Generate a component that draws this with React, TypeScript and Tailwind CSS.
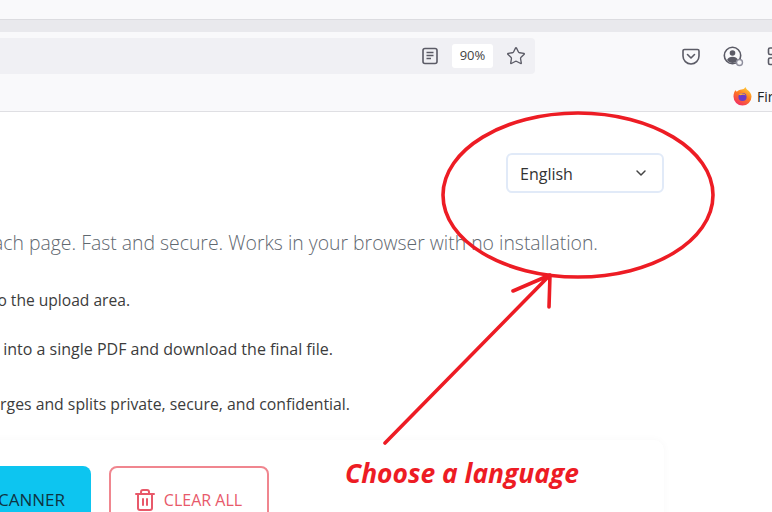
import React from 'react';
import { ChevronDown, Star, Trash2 } from 'lucide-react';

const ReaderIcon = () => (
    <svg width="16" height="18" viewBox="0 0 16 18" fill="none" stroke="#5b5b66" strokeWidth="1.6">
        <rect x="1" y="1.5" width="14" height="15" rx="2" />
        <path d="M4.5 5.5h7M4.5 8.5h7M4.5 11.5h4.5" />
    </svg>
);

const PocketIcon = () => (
    <svg width="18" height="17" viewBox="0 0 18 17" fill="none" stroke="#5b5b66" strokeWidth="1.6" strokeLinecap="round" strokeLinejoin="round">
        <path d="M2.5 1.5h13a1.5 1.5 0 0 1 1.5 1.5v5a8 8 0 0 1-16 0V3a1.5 1.5 0 0 1 1.5-1.5z" />
        <path d="M5.5 6.5 9 10l3.5-3.5" />
    </svg>
);

const AccountIcon = () => (
    <svg width="22" height="22" viewBox="0 0 22 22" fill="none">
        <circle cx="9.5" cy="9.5" r="8.2" stroke="#5b5b66" strokeWidth="1.6" />
        <circle cx="9.5" cy="7" r="2.8" fill="#5b5b66" />
        <path d="M4 14c1-2.500 3-3.200 5.500-3.200S14 11.500 15 14c-1.500 2-3.500 3-5.500 3S5.500 16 4 14z" fill="#5b5b66" />
        <circle cx="16.500" cy="16.500" r="3" fill="#f9f9fb" stroke="#8f8f9d" strokeWidth="1.400" />
    </svg>
);

const ExtensionsIcon = () => (
    <svg width="20" height="20" viewBox="0 0 20 20" fill="none" stroke="#5b5b66" strokeWidth="1.6">
        <rect x="1.500" y="2" width="6.500" height="6.500" rx="1.500" />
        <rect x="1.500" y="12" width="6.500" height="6.500" rx="1.500" />
        <path d="M8 5.500h4M8 15h4" />
    </svg>
);

const FirefoxLogo = () => (
    <svg width="19" height="19" viewBox="0 0 20 20">
        <defs>
            <linearGradient id="ff" x1="0.8" y1="0" x2="0.2" y2="1">
                <stop offset="0" stopColor="#ffd43a" />
                <stop offset="0.45" stopColor="#ff7a1f" />
                <stop offset="1" stopColor="#f0286a" />
            </linearGradient>
        </defs>
        <path d="M13 0c1 1.500 1.200 2.200 2 3 2.500 1.800 4.500 4 4.500 7a9.500 9.500 0 0 1-19 0C.5 7 1.500 5 2.500 3.500L4 5c1-1.500 3-2.500 5-2.500 1.500 0 3-.5 4-2.500z" fill="url(#ff)" />
        <circle cx="10" cy="10.500" r="4.300" fill="#6a3bc7" />
        <path d="M6 7.500C8 6 12 6.500 13.500 9c-1.500-1-3-1-4.500-.5-1 .3-2 .3-3-1z" fill="#ffb02e" />
    </svg>
);

// red marker drawn on top of the screenshot
const Annotation = () => (
    <svg className="absolute inset-0 pointer-events-none" width="772" height="512" viewBox="0 0 772 512" fill="none" stroke="#ed1c24" strokeLinecap="round" strokeLinejoin="round">
        <path
            strokeWidth="3.6"
            d="M578 113C652 113 713 150 713 195C713 241 652 277 578 277C504 277 443 241 443 195C443 150 504 113 578 113Z"
        />
        <path strokeWidth="3.6" d="M385 443L549 276M513 291L550 275L549 307" />
    </svg>
);

export default function App() {
    return (
        <div className="relative h-[512px] w-[772px] overflow-hidden bg-white font-['Open_Sans',sans-serif] text-[#333]">
            {/* browser chrome */}
            <div className="h-[20px] border-b border-[#dcdce0] bg-[#f9f9fb]" />
            <div className="h-[12px] bg-[#e9e9ed]" />
            <div className="flex h-[51px] items-start bg-[#f9f9fb] pt-[6px]">
                <div className="flex h-[36px] w-[535px] shrink-0 items-center justify-end rounded-r-[4px] bg-[#f0f0f4] pr-[9px]">
                    <ReaderIcon />
                    <div className="ml-[14px] mr-[13px] flex h-[24px] w-[41px] items-center justify-center rounded-[3px] bg-white text-[13px] text-[#444]">90%</div>
                    <Star size={20} strokeWidth={1.6} color="#5b5b66" />
                </div>
                <div className="ml-[147px] flex h-[36px] shrink-0 items-center">
                    <PocketIcon />
                    <span className="ml-[23px] mt-[2px]"><AccountIcon /></span>
                    <span className="ml-[22px]"><ExtensionsIcon /></span>
                </div>
            </div>
            <div className="flex h-[29px] items-start justify-end overflow-hidden border-b border-[#dfdfe3] bg-[#f9f9fb] pt-[3px]">
                <div className="flex w-[39px] shrink-0 items-center gap-[5px] whitespace-nowrap text-[14px] text-[#222]">
                    <span className="shrink-0"><FirefoxLogo /></span>
                    <span>Firefox</span>
                </div>
            </div>

            {/* page */}
            <div className="flex justify-end pr-[108px] pt-[41px]">
                <div className="flex h-[40px] w-[158px] items-center justify-between rounded-[6px] border-2 border-[#e1eaf8] bg-white pl-[12px] pr-[13px] text-[16px] text-[#333]">
                    <span className="mt-[1px]">English</span>
                    <ChevronDown size={16} strokeWidth={2.2} color="#444" />
                </div>
            </div>
            <div className="mt-[37px] flex justify-end whitespace-nowrap pr-[174px] text-[19.4px] font-light leading-[26px] text-[#5f6870]">
                <span>Split a PDF into each page. Fast and secure. Works in your browser with no installation.</span>
            </div>
            <div className="mt-[33px] flex justify-end whitespace-nowrap pr-[642px] text-[15.6px] leading-[22px] text-[#3c3c3c]">
                <span>Drag your PDF files into the upload area.</span>
            </div>
            <div className="mt-[27px] flex justify-end whitespace-nowrap pr-[439px] text-[16px] leading-[22px] text-[#3c3c3c]">
                <span>Click the button to merge all files into a single PDF and download the final file.</span>
            </div>
            <div className="mt-[33px] flex justify-end whitespace-nowrap pr-[422px] text-[15.800px] leading-[22px] text-[#3c3c3c]">
                <span>All processing is in your browser, keeping merges and splits private, secure, and confidential.</span>
            </div>

            <div className="ml-[-20px] mt-[25px] w-[684px] rounded-[10px] bg-white pl-[20px] pt-[26px] shadow-[0_0_8px_rgba(0,0,0,0.03)]">
                <div className="flex gap-[18px]">
                    <div className="flex h-[68px] w-[91px] items-center justify-end overflow-hidden whitespace-nowrap rounded-r-[8px] bg-[#0dc5f0] pr-[26px] text-[17px] text-[#0f3442]">
                        <span>SCANNER</span>
                    </div>
                    <div className="flex h-[68px] w-[160px] items-center justify-center gap-[7px] rounded-[8px] border-2 border-[#f0868f] pr-[3px] text-[16px] text-[#e8596a]">
                        <Trash2 size={24} strokeWidth={2} />
                        <span>CLEAR ALL</span>
                    </div>
                </div>
            </div>

            <Annotation />
            <div className="absolute left-[345px] top-[457px] whitespace-nowrap text-[26.400px] font-bold italic leading-[32px] text-[#ed1c24]">Choose a language</div>
        </div>
    );
}
